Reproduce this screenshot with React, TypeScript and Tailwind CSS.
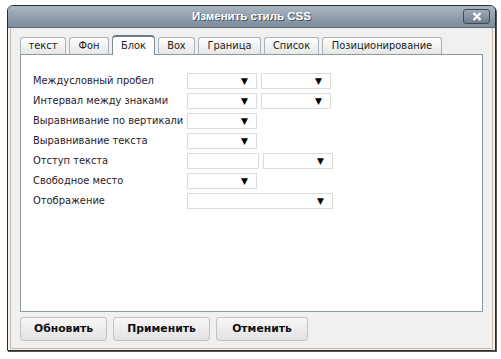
import React from 'react';

const font = { fontFamily: '"DejaVu Sans", Verdana, sans-serif' };

const Select = ({ w }: { w: string }) => (
  <div className={`${w} h-[16px] border border-[#dcdcdc] bg-white flex items-center justify-end pr-[8px]`}>
    <span className="text-[9px] leading-none text-black">▼</span>
  </div>
);

const Input = ({ w }: { w: string }) => <div className={`${w} h-[16px] border border-[#dcdcdc] bg-white`} />;

const tabs = [
  { label: 'текст', w: 'w-[46px]' },
  { label: 'Фон', w: 'w-[40px]' },
  { label: 'Блок', w: 'w-[43px]', active: true },
  { label: 'Box', w: 'w-[37px]' },
  { label: 'Граница', w: 'w-[63px]' },
  { label: 'Список', w: 'w-[55px]' },
  { label: 'Позиционирование', w: 'w-[120px]' },
];

const Row = ({ label, children }: { label: string; children: React.ReactNode }) => (
  <div className="flex items-center h-[16px]">
    <div className="w-[154px] whitespace-nowrap">{label}</div>
    {children}
  </div>
);

export default function App() {
  return (
    <div className="w-[501px] h-[359px] bg-white pt-[5px] pl-[7px]" style={font}>
      <div className="w-[489px] h-[346px] border border-[#2b2b2b] rounded-t-[6px] bg-[#f4f2ef] flex flex-col shadow-[1px_1px_0_#555]">
        {/* title bar */}
        <div className="h-[22px] rounded-t-[5px] bg-gradient-to-b from-[#a9b6c2] to-[#7c8c9b] border-b border-[#5d6b78] flex items-center relative">
          <div className="flex-1 text-center text-[11.5px] font-bold text-white [text-shadow:1px_1px_0_#4a5560]" style={{ fontFamily: '"Liberation Sans", Arial, sans-serif' }}>
            Изменить стиль CSS
          </div>
          <div className="absolute right-[5px] top-[3px] w-[27px] h-[15px] rounded-[3px] border border-[#3f4a55] bg-gradient-to-b from-[#9eabb7] to-[#6f7f8e] flex items-center justify-center">
            <svg width="10" height="9" viewBox="0 0 10 9">
              <path d="M1.5 1 L8.5 8 M8.5 1 L1.5 8" stroke="white" strokeWidth="2.2" />
            </svg>
          </div>
        </div>
        {/* body */}
        <div className="flex-1 px-[2px] pb-[1px]">
          <div className="h-full border-x border-b border-[#c8baae] bg-[#f0f0f0] px-[9px] pt-[6px] flex flex-col">
            <div className="flex items-end gap-[3px] h-[20px]">
              {tabs.map((t) =>
                t.active ? (
                  <div key={t.label} className={`${t.w} h-[20px] -mb-px relative z-10 rounded-t-[4px] border border-b-0 border-[#7f8c97] border-t-2 border-t-[#6a7986] bg-white flex items-center justify-center text-[9.9px] text-[#222]`}>
                    {t.label}
                  </div>
                ) : (
                  <div key={t.label} className={`${t.w} h-[17px] rounded-t-[3px] border border-b-0 border-[#a9b3bb] bg-gradient-to-b from-white to-[#e6e6e6] flex items-center justify-center text-[9.9px] text-[#222]`}>
                    {t.label}
                  </div>
                )
              )}
            </div>
            <div className="h-[258px] border border-[#8c9a9a] bg-white pl-[12px] pt-[18px] flex flex-col gap-[4px] text-[9.9px] text-[#2a1a2a]">
              <Row label="Междусловный пробел">
                <Select w="w-[70px]" />
                <div className="w-[4px]" />
                <Select w="w-[70px]" />
              </Row>
              <Row label="Интервал между знаками">
                <Select w="w-[70px]" />
                <div className="w-[4px]" />
                <Select w="w-[70px]" />
              </Row>
              <Row label="Выравнивание по вертикали">
                <Select w="w-[70px]" />
              </Row>
              <Row label="Выравнивание текста">
                <Select w="w-[70px]" />
              </Row>
              <Row label="Отступ текста">
                <Input w="w-[72px]" />
                <div className="w-[4px]" />
                <Select w="w-[70px]" />
              </Row>
              <Row label="Свободное место">
                <Select w="w-[70px]" />
              </Row>
              <Row label="Отображение">
                <Select w="w-[146px]" />
              </Row>
            </div>
            <div className="flex gap-[6px] mt-[5px]">
              {[
                ['Обновить', 'w-[87px]'],
                ['Применить', 'w-[97px]'],
                ['Отменить', 'w-[92px]'],
              ].map(([l, w]) => (
                <div key={l} className={`${w} h-[24px] rounded-[3px] border border-[#c3c3c3] bg-gradient-to-b from-[#f7f7f7] to-[#e2e2e2] flex items-center justify-center text-[10.8px] font-bold text-[#111]`}>
                  {l}
                </div>
              ))}
            </div>
          </div>
        </div>
      </div>
    </div>
  );
}
